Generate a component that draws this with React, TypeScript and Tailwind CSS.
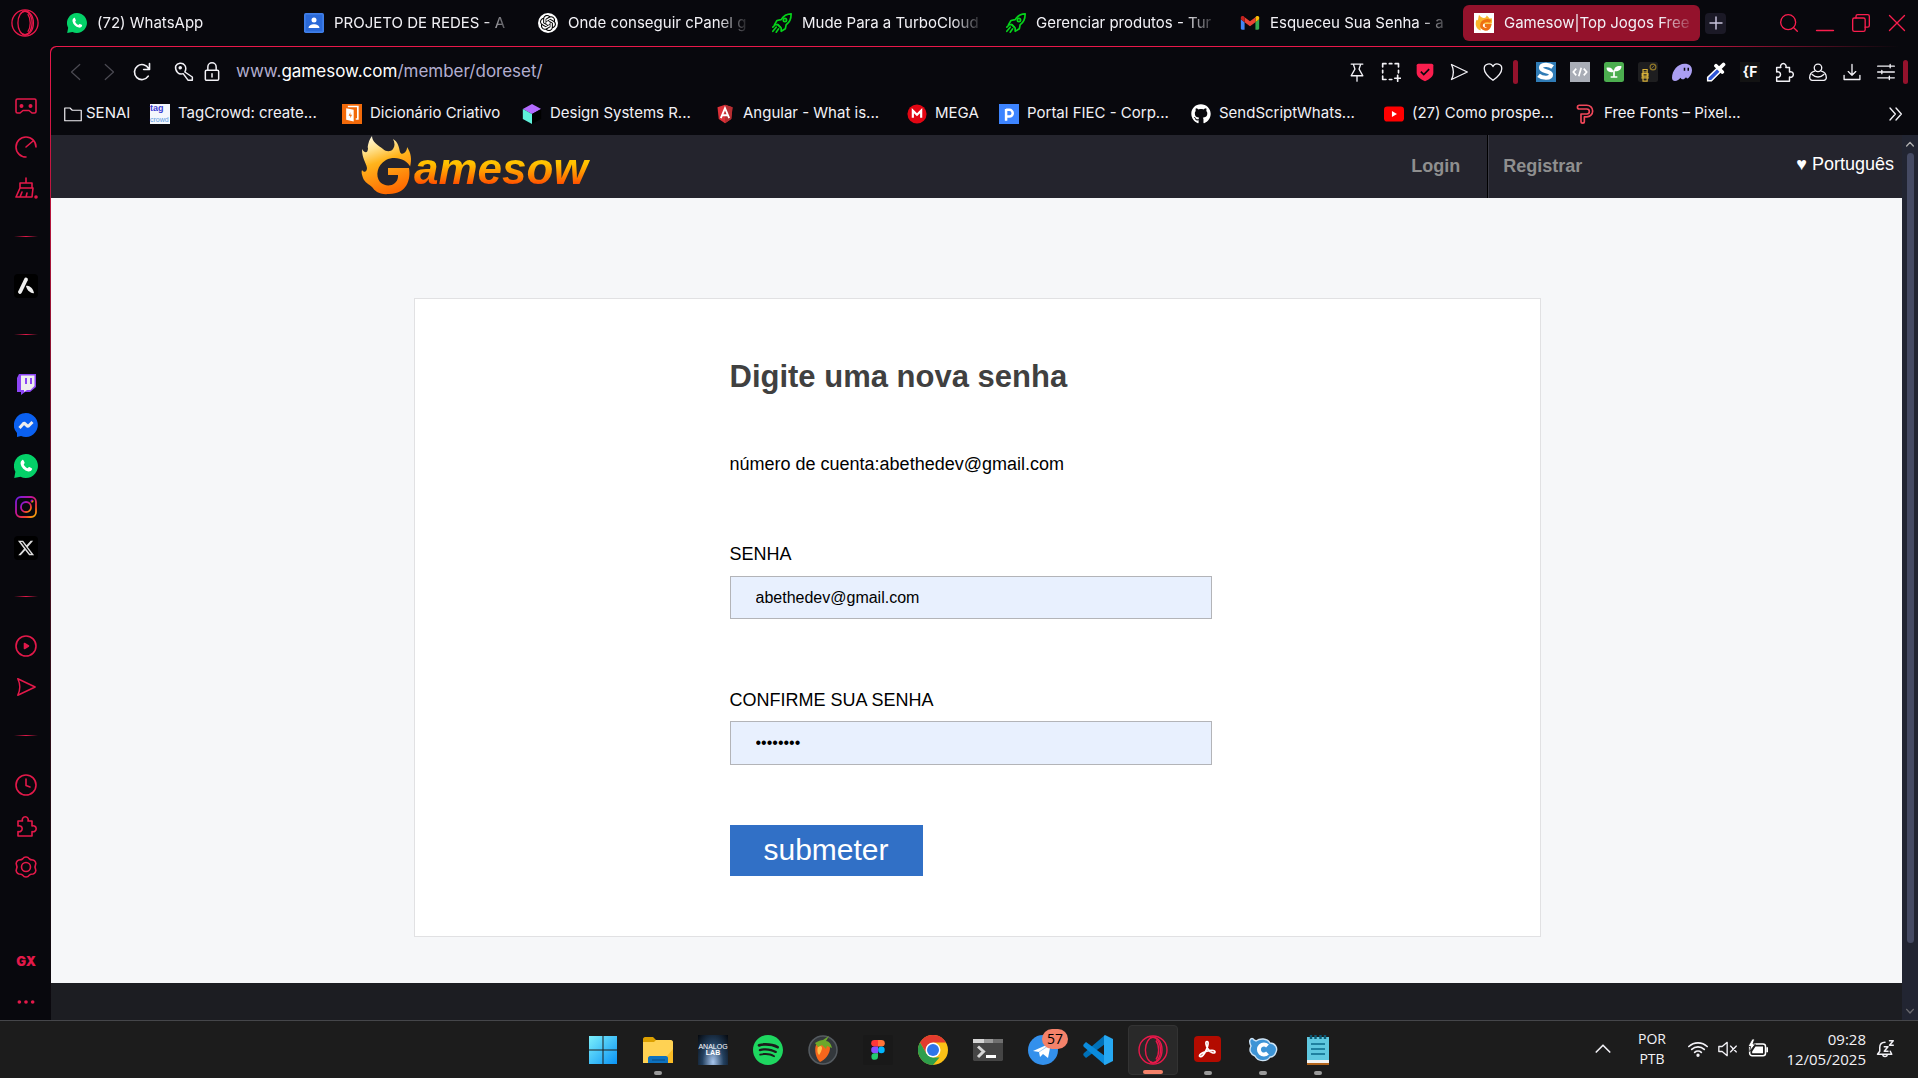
import type { ReactNode } from "react"
import { FaXTwitter } from "react-icons/fa6"
import { FaGithub } from "react-icons/fa"
import { SiOpenai, SiSpotify } from "react-icons/si"

interface StrokeProps {
  children: ReactNode
  className?: string
  width?: number
}

function Stroke({ children, className = "size-5", width = 1.6 }: StrokeProps) {
  return (
    <svg
      viewBox="0 0 24 24"
      className={`shrink-0 ${className}`}
      fill="none"
      stroke="currentColor"
      strokeWidth={width}
      strokeLinecap="round"
      strokeLinejoin="round"
      aria-hidden="true"
    >
      {children}
    </svg>
  )
}

function Fill({ children, className = "size-5" }: StrokeProps) {
  return (
    <svg viewBox="0 0 24 24" className={`shrink-0 ${className}`} aria-hidden="true">
      {children}
    </svg>
  )
}

function OperaRing({ className }: { className: string }) {
  return (
    <svg viewBox="0 0 30 30" className={className} fill="none" stroke="#e8184a" strokeWidth="1.4" aria-hidden="true">
      <circle cx="15" cy="15" r="14" />
      <ellipse cx="15" cy="15" rx="7.6" ry="12.6" />
      <path d="M12 3C18 0 24 6 24 15s-6 15-12 12" />
      <path d="M18 5.500c3.500 5 3.500 14 0 19" />
    </svg>
  )
}

function WhatsAppIcon({ className = "size-5" }: { className?: string }) {
  return (
    <Fill className={className}>
      <path fill="#04d168" d="M12 0a12 12 0 1 1-5.500 22.700L.2 24l1.200-6.200A12 12 0 0 1 12 0z" />
      <path
        fill="#fff"
        d="M8.300 6c.5-.3 1-.2 1.300.4l1 2.200c.2.500-.1.900-.9 1.800.9 1.700 2.200 3 4 3.900.8-1 1.200-1.400 1.700-1.200l2.300 1.100c.5.300.5.800.3 1.400-.6 1.500-2.300 2.200-3.700 1.900-4-.9-7-4-7.700-7.700-.2-1.500.5-3.100 1.700-3.800z"
      />
    </Fill>
  )
}

function RocketIcon() {
  return (
    <Stroke className="size-5 text-[#06d21a]" width={2}>
      <path d="M23 1c-6 0-9 2-12 7l-5 1-3 5 4 0 4 4 0 4 5-3 1-5c5-3 6-7 6-13z" />
      <circle cx="15.500" cy="8.500" r="2" />
      <path d="M7 14l3 3M5 17l-4 5M8 19l-3 4M3 15l-2 2" />
    </Stroke>
  )
}

function FlameG() {
  return (
    <svg viewBox="0 0 54 60" className="h-[60px] w-[54px] shrink-0" aria-hidden="true">
      <defs>
        <linearGradient id="flame" x1="0.2" y1="0" x2="0.5" y2="1">
          <stop offset="0" stopColor="#fff8dc" />
          <stop offset=".22" stopColor="#ffe08a" />
          <stop offset=".45" stopColor="#ffb41c" />
          <stop offset="1" stopColor="#ff6a00" />
        </linearGradient>
      </defs>
      <path
        fill="url(#flame)"
        d="M12 1c0 6 6 9 11 13 3 3 8 3 10 0 2-3 2-6 0-10 5 3 6 8 7 13 1 3 4 2 6-1 1-2 1-3 1-4 4 6 5 12 3 20l-1 1c2 11-2 26-20 26-10 1-14-3-17-7-3-3-7-4-9-9-1-3-2-6-1-8 2 3 5 2 5-2-1-6-5-9-5-19 3 5 6 4 6-1C7 13 9 4 12 1z"
      />
      <path
        fill="#24242d"
        d="M51 33C47 24 35 20.500 26 25c-9 5-11 16-6 22 6 6 17 4 18-5v-2H28v-7z"
      />
    </svg>
  )
}

function FlameFavicon() {
  return (
    <Fill>
      <rect width="24" height="24" fill="#fff" />
      <path fill="#fbb62c" d="M6 2c1 2 4 4 6 4 2 0 3-1 3-3 2 1 3 3 4 4l2-1c1 3 1 5 0 7H8v8C2 19 1 13 3 8c1 1 2 1 2-1z" />
      <path fill="none" stroke="#ee7014" strokeWidth="3.400" d="M20 10c-4-2-10-1-11 4-1 6 8 8 10 1h-6" />
    </Fill>
  )
}

const puzzle = (
  <path d="M4 7h4.500a3 3 0 1 1 5.500 0H18v5a3 3 0 1 1 0 5.500V22H4v-4.500a3 3 0 1 0 0-5.500z" />
)
const plane = <path d="M3 3l19 9L3 21c3-6 3-12 0-18z" />

const tabs = [
  { title: "(72) WhatsApp", width: "w-[237px]", icon: <WhatsAppIcon /> },
  {
    title: "PROJETO DE REDES - A",
    width: "w-[234px]",
    icon: (
      <Fill>
        <rect width="24" height="24" rx="2" fill="#3f7ee8" />
        <rect x="2" y="2" width="20" height="20" fill="#2a69d8" />
        <circle cx="12" cy="8.500" r="3" fill="#fff" />
        <path d="M5.500 18c0-6 13-6 13 0z" fill="#fff" />
      </Fill>
    ),
  },
  {
    title: "Onde conseguir cPanel g",
    width: "w-[234px]",
    icon: (
      <span className="grid size-5 shrink-0 place-items-center rounded-full bg-white text-black">
        <SiOpenai className="size-4" />
      </span>
    ),
  },
  { title: "Mude Para a TurboCloud", width: "w-[234px]", icon: <RocketIcon /> },
  { title: "Gerenciar produtos - Tur", width: "w-[234px]", icon: <RocketIcon /> },
  {
    title: "Esqueceu Sua Senha - a",
    width: "w-[234px]",
    icon: (
      <Fill>
        <path fill="#4285f4" d="M2 20h3.500v-9L1 7.500V19z" />
        <path fill="#34a853" d="M18.500 20H22l1-1V7.500L18.500 11z" />
        <path fill="#fbbc04" d="M18.500 5v6L23 7.500V5.500C23 3.500 21 3 19.500 4z" />
        <path fill="#ea4335" d="M5.500 11V5l6.500 5 6.500-5v6L12 16z" />
        <path fill="#c5221f" d="M1 5.500v2L5.500 11V5L4.500 4C3 3 1 3.500 1 5.500z" />
      </Fill>
    ),
  },
]

const bookmarks = [
  {
    label: "TagCrowd: create...",
    width: "w-48",
    icon: (
      <span className="flex size-5 shrink-0 flex-col justify-between bg-[#f4f7fd] font-['Liberation_Sans'] leading-[9px]">
        <span className="text-[9px] font-bold text-[#3b3bd0]">tag</span>
        <span className="text-[7px] text-[#5b9be0]">crowd</span>
      </span>
    ),
  },
  {
    label: "Dicionário Criativo",
    width: "w-[180px]",
    icon: (
      <Fill>
        <rect width="24" height="24" fill="#f26a0a" />
        <path fill="#fff" d="M5 5l9 2v14l-9-2z" />
        <path d="M7 3h12v15h-2.500" fill="none" stroke="#fff" strokeWidth="2" />
        <path fill="#f26a0a" d="M10 10l-2 4h2v3l2-4h-2z" />
      </Fill>
    ),
  },
  {
    label: "Design Systems R...",
    width: "w-[193px]",
    icon: (
      <Fill>
        <path fill="#b36bff" d="M12 0l11 6-11 6L1 6z" />
        <path fill="#5ff0da" d="M1 6l11 6v12L1 18z" />
        <path fill="#000" d="M23 6l-11 6v12l11-6z" />
      </Fill>
    ),
  },
  {
    label: "Angular - What is...",
    width: "w-48",
    icon: (
      <Fill>
        <path fill="#dd3038" d="M12 1l9 3-1.500 14L12 23l-7.500-5L3 4z" />
        <path fill="#b52e31" d="M12 1l9 3-1.500 14L12 23z" />
        <path fill="none" stroke="#fff" strokeWidth="2.200" d="M7 17l5-12 5 12M9 13.500h6" />
      </Fill>
    ),
  },
  {
    label: "MEGA",
    width: "w-[92px]",
    icon: (
      <Fill>
        <circle cx="12" cy="12" r="11.500" fill="#e30613" />
        <path d="M7 16.500V8l5 5 5-5v8.500" fill="none" stroke="#fff" strokeWidth="2.600" />
      </Fill>
    ),
  },
  {
    label: "Portal FIEC - Corp...",
    width: "w-48",
    icon: (
      <Fill>
        <rect width="24" height="24" fill="#3d84ff" />
        <path d="M8.500 20V6M8.500 7h4a4 4 0 0 1 0 8h-4" fill="none" stroke="#fff" strokeWidth="3" />
      </Fill>
    ),
  },
  { label: "SendScriptWhats...", width: "w-[193px]", icon: <FaGithub className="size-5 shrink-0 text-white" /> },
  {
    label: "(27) Como prospe...",
    width: "w-48",
    icon: (
      <Fill>
        <rect y="3" width="24" height="18" rx="4" fill="#f00" />
        <path fill="#fff" d="M9.500 8.500v7l6-3.500z" />
      </Fill>
    ),
  },
  {
    label: "Free Fonts – Pixel...",
    width: "w-48",
    icon: (
      <Stroke className="size-5 text-[#f0475a]" width={2}>
        <path d="M4 1.500h9a7 7 0 0 1 0 14h-3V21a2 2 0 0 1-4 0v-9h7a3 3 0 0 0 0-6H4a2 2 0 0 1 0-4.500" />
      </Stroke>
    ),
  },
]

const pageActions = [
  {
    label: "Fixar",
    icon: (
      <Stroke>
        <path d="M5 2.500h14M7.500 2.500l2 6-4.500 8h14l-4.500-8 2-6M12 16.500V23" />
      </Stroke>
    ),
  },
  {
    label: "Capturar",
    icon: (
      <Stroke width={2}>
        <path d="M2 6V2h4M10 2h3M17 2h4v4M2 10v3M2 17v4h4M10 21h3M21 10v3M20 16v7M16.500 19.500h7" />
      </Stroke>
    ),
  },
  {
    label: "Bloqueador",
    icon: (
      <Fill>
        <path fill="#fa1e4e" d="M2 4c0-1 1-2 2-2h16c1 0 2 1 2 2v9c0 5-5 8-10 10C7 21 2 18 2 13z" />
        <path d="M7 11.500l3.500 3.500L17 8.500" fill="none" stroke="#08080d" strokeWidth="2" />
      </Fill>
    ),
  },
  { label: "Enviar", icon: <Stroke>{plane}</Stroke> },
  {
    label: "Favoritar",
    icon: (
      <Stroke>
        <path d="M12 22C6 17.500 1.500 13 1.500 8A5.500 5.500 0 0 1 12 5.500 5.500 5.500 0 0 1 22.500 8c0 5-4.500 9.500-10.500 14z" />
      </Stroke>
    ),
  },
]

const extensions = [
  {
    label: "Extensão S",
    icon: (
      <Fill>
        <rect width="24" height="24" fill="#2f7bb5" />
        <path d="M20 6c-5-4-14-3-14 1 0 5 12 3 12 8 0 5-10 5-15 1" fill="none" stroke="#fff" strokeWidth="5" />
      </Fill>
    ),
  },
  {
    label: "Código",
    icon: (
      <Fill>
        <rect width="24" height="24" fill="#a9adb6" />
        <path d="M7.500 8L4 12l3.500 4M16.500 8l3.500 4-3.500 4M13.500 7l-3 10" fill="none" stroke="#fff" strokeWidth="2" />
      </Fill>
    ),
  },
  {
    label: "Broto",
    icon: (
      <Fill>
        <rect width="24" height="24" rx="3" fill="#4cae4f" />
        <path fill="#fff" d="M3 7c5-1 8 1 8 5-5 1-8-1-8-5zM21 5c-5-1-9 1-9 6 5 1 9-2 9-6z" />
        <path d="M12 10v8M8 18h8" stroke="#fff" strokeWidth="2" />
      </Fill>
    ),
  },
  {
    label: "Abelha",
    icon: (
      <Fill>
        <rect width="24" height="24" rx="3" fill="#1e1e20" />
        <path d="M6 9h5v3H6zM5 14h7v3H5zM4 19h9M6 12v11h5V12" fill="none" stroke="#d8b13a" strokeWidth="1.400" />
        <circle cx="18" cy="6" r="3.500" fill="none" stroke="#8f7628" strokeWidth="1.400" />
        <path d="M16 8l4-4" stroke="#8f7628" />
      </Fill>
    ),
  },
  {
    label: "Fantasma",
    icon: (
      <Fill>
        <path fill="#ab9ff2" d="M0 19C0 10 7 2 15 2c6 0 9 3 9 8 0 4-2 7-4 9-1 1-3 1-3-1-1 2-4 4-6 2l-1-1c-2 4-10 6-10 0z" />
        <path d="M15 7v3.500M19.500 7v3.500" stroke="#08080d" strokeWidth="1.800" />
      </Fill>
    ),
  },
  {
    label: "Conta-gotas",
    icon: (
      <Fill>
        <path d="M14 7l4 4L6.500 22.500H2v-4z" fill="#2f57d8" stroke="#fff" strokeWidth="1.800" />
        <path d="M12 4.500l7.500 7.500M16 8l5-5" stroke="#fff" strokeWidth="4.500" strokeLinecap="round" />
      </Fill>
    ),
  },
  {
    label: "Fontes",
    icon: (
      <span className="grid size-5 place-items-center bg-[#131313] text-sm font-bold text-white">
        {"{F"}
      </span>
    ),
  },
  { label: "Extensões", icon: <Stroke className="size-[22px]">{puzzle}</Stroke> },
  {
    label: "Perfil",
    icon: (
      <Stroke>
        <circle cx="12" cy="7" r="4.500" />
        <path d="M8 11c-4 1-6 4-6 8 0 1 1 3 3 3h14c2 0 3-2 3-3 0-4-2-7-6-8M5 15c4 4 10 4 14 0" />
      </Stroke>
    ),
  },
  {
    label: "Downloads",
    icon: (
      <Stroke>
        <path d="M12 3v13M7.500 11.500L12 16l4.500-4.500M2.500 16v5h19v-5" />
      </Stroke>
    ),
  },
  {
    label: "Configuração fácil",
    icon: (
      <Stroke>
        <path d="M2 5h20M2 12h20M2 19h20M17 3v4M7 10v4M16 17v4" />
      </Stroke>
    ),
  },
]

const sidebarGroups = [
  [
    {
      label: "GX Games",
      icon: (
        <Stroke className="size-6">
          <path d="M3.500 5h17c1 0 1.500.5 1.500 1.500v11c0 1-.5 1.500-1.500 1.500H18l-3-2.500H9L6 19H3.500C2.500 19 2 18.500 2 17.500v-11C2 5.500 2.500 5 3.500 5z" />
          <circle cx="7.500" cy="12" r="1.200" fill="currentColor" />
          <circle cx="16.500" cy="12" r="1.200" fill="currentColor" />
        </Stroke>
      ),
    },
    {
      label: "GX Control",
      icon: (
        <Stroke className="size-6">
          <path d="M12 22a10 10 0 1 1 10-10M12 12l7-6" />
        </Stroke>
      ),
    },
    {
      label: "GX Cleaner",
      icon: (
        <Stroke className="size-6">
          <path d="M12 2v5M6 7h12v5H6zM6 12l-4 9h16l1-9M8 16l-2 5M13 17l-1 4" />
          <circle cx="22" cy="21" r="1" fill="currentColor" />
        </Stroke>
      ),
    },
  ],
  [
    {
      label: "Aria",
      icon: (
        <Fill className="size-6">
          <rect width="24" height="24" rx="4" fill="#000" />
          <path d="M12 5.500L6 18" stroke="#eee" strokeWidth="3.800" strokeLinecap="round" />
          <path fill="#eee" d="M12 12c3-1 7 2 8 7-2 1-7-2-8-7z" />
        </Fill>
      ),
    },
  ],
  [
    {
      label: "Twitch",
      icon: (
        <Fill className="size-6">
          <path fill="#8d45f5" d="M5 2h17v13l-6 5h-5l-4 3v-3H3V6z" />
          <path fill="#eee" d="M7 3.500h13.500V14l-4 4H13l-3 2v-2H7z" />
          <path d="M12 6v6M17 6v6" stroke="#8d45f5" strokeWidth="2" />
        </Fill>
      ),
    },
    {
      label: "Messenger",
      icon: (
        <Fill className="size-6">
          <path fill="#0a60f0" d="M12 0a12 12 0 1 1-5 23l-4 1v-4A12 12 0 0 1 12 0z" />
          <path d="M5.500 15l4.500-5 4 3.500L18.500 9" fill="none" stroke="#eee" strokeWidth="3" strokeLinejoin="bevel" />
        </Fill>
      ),
    },
    { label: "WhatsApp", icon: <WhatsAppIcon className="size-6" /> },
    {
      label: "Instagram",
      icon: (
        <svg viewBox="0 0 24 24" className="size-6" fill="none" stroke="url(#insta)" strokeWidth="1.800" aria-hidden="true">
          <defs>
            <linearGradient id="insta" x1="0" y1="0" x2="1" y2="1">
              <stop offset="0" stopColor="#6a1de8" />
              <stop offset=".45" stopColor="#d0148c" />
              <stop offset=".75" stopColor="#f2452a" />
              <stop offset="1" stopColor="#f9c400" />
            </linearGradient>
          </defs>
          <rect x="2" y="2" width="20" height="20" rx="5" />
          <circle cx="12" cy="12" r="5" />
          <circle cx="18" cy="6" r=".6" />
        </svg>
      ),
    },
    {
      label: "X",
      icon: (
        <span className="grid size-6 place-items-center rounded bg-black text-[#ddd]">
          <FaXTwitter className="size-[18px]" />
        </span>
      ),
    },
  ],
  [
    {
      label: "Player",
      icon: (
        <Stroke className="size-6">
          <circle cx="12" cy="12" r="10" />
          <path d="M10.500 9.500v5l4-2.500z" fill="currentColor" />
        </Stroke>
      ),
    },
    { label: "Fluxo", icon: <Stroke className="size-[22px]">{plane}</Stroke> },
  ],
  [
    {
      label: "Histórico",
      icon: (
        <Stroke className="size-6">
          <circle cx="12" cy="12" r="10" />
          <path d="M12 6v6.500l4 1.500" />
        </Stroke>
      ),
    },
    { label: "Extensões", icon: <Stroke className="size-6">{puzzle}</Stroke> },
    {
      label: "Configurações",
      icon: (
        <Stroke className="size-6">
          <circle cx="12" cy="12" r="4.500" />
          <path d="M9 3.500c1-2 5-2 6 0 1 1.500 2 1.500 4 1.500 2 .5 3.500 3 2.500 5-.8 1.500-.8 2.500 0 4 1 2-.5 4.500-2.500 5-2 0-3 0-4 1.500-1 2-5 2-6 0-1-1.500-2-1.500-4-1.500-2-.5-3.500-3-2.500-5 .8-1.500.8-2.500 0-4C1.500 8 3 5.500 5 5c2 0 3 0 4-1.500z" />
        </Stroke>
      ),
    },
  ],
]

function TabStrip() {
  return (
    <header className="flex h-[46px] items-center">
      <button aria-label="Menu" className="flex w-[50px] shrink-0 justify-center">
        <OperaRing className="size-7" />
      </button>
      <div className="flex min-w-0 items-center pl-[6px]">
        {tabs.map((tab) => (
          <button
            key={tab.title}
            className={`flex h-9 min-w-0 items-center gap-[10px] pr-3 pl-[11px] text-left ${tab.width}`}
          >
            {tab.icon}
            <span className="flex-1 overflow-hidden pt-px whitespace-nowrap [mask-image:linear-gradient(to_right,black_150px,transparent_182px)]">
              {tab.title}
            </span>
          </button>
        ))}
        <button className="flex h-9 w-[237px] min-w-0 items-center gap-[10px] rounded-md bg-[#94122c] pr-2 pl-[11px] text-left">
          <FlameFavicon />
          <span className="flex-1 overflow-hidden pt-px whitespace-nowrap [mask-image:linear-gradient(to_right,black_156px,transparent_192px)]">
            Gamesow|Top Jogos Free
          </span>
        </button>
        <button aria-label="Nova aba" className="ml-[5px] grid size-[21px] shrink-0 place-items-center rounded bg-[#1b1926] text-[#c9c4dc]">
          <Stroke className="size-4" width={2.200}>
            <path d="M12 3v18M3 12h18" />
          </Stroke>
        </button>
      </div>
      <div className="ml-auto flex items-center gap-4 pr-[11px] text-[#fa1e4e]">
        <button aria-label="Pesquisar">
          <Stroke>
            <circle cx="11" cy="11" r="9" />
            <path d="M18 18l4 4" />
          </Stroke>
        </button>
        <button aria-label="Minimizar">
          <Stroke>
            <path d="M2 21h20" strokeWidth="2" />
          </Stroke>
        </button>
        <button aria-label="Restaurar">
          <Stroke>
            <rect x="2" y="6" width="15" height="16" rx="2" />
            <path d="M6 6V4c0-1 1-2 2-2h12c1 0 2 1 2 2v11c0 1-1 2-2 2h-3" />
          </Stroke>
        </button>
        <button aria-label="Fechar">
          <Stroke>
            <path d="M3 3l18 18M21 3L3 21" />
          </Stroke>
        </button>
      </div>
    </header>
  )
}

function Sidebar() {
  return (
    <nav className="flex w-[50px] shrink-0 flex-col items-center pt-[39px] pl-[2px] text-[#e3194a]">
      {sidebarGroups.map((group, index) => (
        <div key={index} className="flex flex-col items-center">
          {index > 0 && (
            <span className="my-7 h-px w-6 bg-linear-to-r from-transparent via-[#e3194a] to-transparent" />
          )}
          {group.map((item) => (
            <button key={item.label} aria-label={item.label} className="grid h-[41px] w-10 place-items-center">
              {item.icon}
            </button>
          ))}
        </div>
      ))}
      <button className="mt-auto h-11 w-10 text-[13px] font-black">GX</button>
      <button aria-label="Mais" className="grid h-9 w-10 place-items-center">
        <Fill>
          <g fill="#e3194a">
            <circle cx="4" cy="12" r="2.200" />
            <circle cx="12" cy="12" r="2.200" />
            <circle cx="20" cy="12" r="2.200" />
          </g>
        </Fill>
      </button>
    </nav>
  )
}

function AddressBar() {
  return (
    <div className="flex h-[50px] items-center pr-[10px] pl-2">
      <button aria-label="Voltar" className="grid w-[33px] place-items-center text-[#4b4a52]">
        <Stroke className="size-[18px]">
          <path d="M17 2L6 12l11 10" />
        </Stroke>
      </button>
      <button aria-label="Avançar" className="grid w-[33px] place-items-center text-[#4b4a52]">
        <Stroke className="size-[18px]">
          <path d="M7 2l11 10L7 22" />
        </Stroke>
      </button>
      <button aria-label="Recarregar" className="grid w-[33px] place-items-center">
        <Stroke width={2}>
          <path d="M19.500 17A9 9 0 1 1 20 8M21 2v7h-7" />
        </Stroke>
      </button>
      <button aria-label="Senhas" className="ml-[14px] grid w-6 place-items-center">
        <Stroke width={1.800}>
          <path d="M2 5c2-4 8-5 11-1 2 3 1 6 0 8l9 6v4h-5l-6-8C6 16 1 11 2 5z" />
          <circle cx="7.500" cy="7" r="1.200" fill="currentColor" />
        </Stroke>
      </button>
      <button aria-label="Segurança" className="ml-1 grid w-6 place-items-center">
        <Stroke width={1.800}>
          <rect x="4" y="10" width="16" height="12" rx="1.500" />
          <path d="M7 10V6a5 5 0 0 1 10 0v4M12 14v4" />
        </Stroke>
      </button>
      <p className="ml-3 text-[17px] text-[#b3aed0]">
        www.<span className="text-white">gamesow.com</span>/member/doreset/
      </p>
      <div className="ml-auto flex items-center">
        {pageActions.map((action) => (
          <button key={action.label} aria-label={action.label} className="grid w-[34px] place-items-center">
            {action.icon}
          </button>
        ))}
        <span className="mr-[11px] ml-[3px] h-6 w-[5px] rounded-sm bg-[#94122c]" />
        {extensions.map((extension) => (
          <button key={extension.label} aria-label={extension.label} className="grid w-[34px] place-items-center">
            {extension.icon}
          </button>
        ))}
        <span className="h-6 w-[5px] rounded-sm bg-[#94122c]" />
      </div>
    </div>
  )
}

function BookmarksBar() {
  return (
    <div className="flex h-[38px] items-center pr-[14px] pb-[5px] pl-[13px]">
      <button className="flex w-[86px] items-center gap-1">
        <Stroke className="size-[18px]">
          <path d="M1 4h7l3 3h12v14H1z" />
        </Stroke>
        SENAI
      </button>
      {bookmarks.map((bookmark) => (
        <a key={bookmark.label} href="#" className={`flex items-center gap-2 whitespace-nowrap ${bookmark.width}`}>
          {bookmark.icon}
          {bookmark.label}
        </a>
      ))}
      <button aria-label="Mais favoritos" className="ml-auto">
        <Stroke className="size-4" width={2}>
          <path d="M3 3l8 9-8 9M12 3l8 9-8 9" />
        </Stroke>
      </button>
    </div>
  )
}

function SiteHeader() {
  return (
    <div className="flex h-[63px] bg-[#24242d] pr-2 pl-[309px] text-lg">
      <a href="#" aria-label="Gamesow" className="flex items-start">
        <FlameG />
        <span className="bg-linear-to-b from-[#ffc400] from-45% to-[#ff4a00] to-80% bg-clip-text pt-[6px] pr-2 text-[44px] leading-[56px] font-bold text-transparent italic">
          amesow
        </span>
      </a>
      <nav className="ml-auto flex font-bold text-[#8f8f8f]">
        <a href="#" className="flex items-center border-r border-black pr-[27px] pb-[2px]">
          Login
        </a>
        <a href="#" className="flex items-center border-l border-[#3a3a44] pr-[214px] pb-[2px] pl-[14px]">
          Registrar
        </a>
      </nav>
      <button className="pb-[6px] text-white">♥ Português</button>
    </div>
  )
}

function ResetForm() {
  return (
    <form className="mx-auto w-[496px] pt-[58px] pb-[60px] text-lg leading-6" onSubmit={(e) => e.preventDefault()}>
      <h1 className="text-[31px] leading-10 font-bold text-[#404040]">Digite uma nova senha</h1>
      <p className="mt-[55px]">número de cuenta:abethedev@gmail.com</p>
      <label htmlFor="senha" className="mt-[66px] block">
        SENHA
      </label>
      <input
        id="senha"
        type="text"
        defaultValue="abethedev@gmail.com"
        className="mt-[10px] block h-[43px] w-[482px] border border-[#b3b4b8] bg-[#e8f0fe] px-[25px] text-base"
      />
      <label htmlFor="confirme" className="mt-[69px] block">
        CONFIRME SUA SENHA
      </label>
      <input
        id="confirme"
        type="password"
        defaultValue="abethede"
        className="mt-[9px] block h-11 w-[482px] border border-[#b3b4b8] bg-[#e8f0fe] px-[25px] text-base"
      />
      <button type="submit" className="mt-[60px] h-[51px] w-[193px] bg-[#3170c6] pb-[2px] text-[30px] text-white">
        submeter
      </button>
    </form>
  )
}

function SitePage() {
  return (
    <div className="flex flex-1">
      <div className="flex min-w-0 flex-1 flex-col font-['Liberation_Sans',Arial,sans-serif] text-black">
        <SiteHeader />
        <main className="bg-[#f6f7f9] pt-[100px] pb-[46px] pl-[2px]">
          <div className="mx-auto max-w-[1127px] border border-[#e1e1e3] bg-white">
            <ResetForm />
          </div>
        </main>
        <footer className="flex-1 bg-[#1c1d22]" />
      </div>
      <div className="flex w-4 flex-col items-center justify-between bg-[#222532] py-[5px] text-[#b0b0b0]">
        <Stroke className="size-2" width={4}>
          <path d="M2 18L12 7l10 11" />
        </Stroke>
        <span className="mt-[5px] mb-16 w-[7px] flex-1 rounded-full bg-[#454a63]" />
        <Stroke className="size-2 text-[#6b6b70]" width={4}>
          <path d="M2 7l10 11L22 7" />
        </Stroke>
      </div>
    </div>
  )
}

const taskbarApps = [
  {
    label: "Iniciar",
    icon: (
      <svg viewBox="0 0 30 30" className="size-[30px]" aria-hidden="true">
        <defs>
          <linearGradient id="win" x1="0" y1="0" x2="1" y2="1">
            <stop offset="0" stopColor="#7cf0fb" />
            <stop offset="1" stopColor="#0a93f5" />
          </linearGradient>
        </defs>
        <path fill="url(#win)" d="M1 1h13.500v13.500H1zM15.500 1H29v13.500H15.500zM1 15.500h13.500V29H1zM15.500 15.500H29V29H15.500z" />
      </svg>
    ),
  },
  {
    label: "Explorador de Arquivos",
    running: true,
    icon: (
      <svg viewBox="0 0 30 30" className="size-[30px]" aria-hidden="true">
        <path fill="#dca000" d="M0 4c0-1 1-2 2-2h8l3 3v6H0z" />
        <path fill="#ffd253" d="M0 7h11l2-2h15c1 0 2 1 2 2v21H0z" />
        <path fill="#fbbc25" d="M18 28L30 14v14z" />
        <path fill="#0d72c0" d="M5 28v-5c0-1 1-2 2-2h16c1 0 2 1 2 2v5z" />
        <path d="M9 25h13" stroke="#0a4a80" />
      </svg>
    ),
  },
  {
    label: "Analog Lab",
    icon: (
      <span className="flex size-[30px] flex-col items-center justify-center bg-radial-[at_50%_90%] from-[#a8c6ee] via-[#23405f] to-[#05080d] font-['Liberation_Sans'] text-[7px] leading-[6px] text-white">
        <span>ANALOG</span>
        <b>LAB</b>
      </span>
    ),
  },
  { label: "Spotify", icon: <SiSpotify className="size-[30px] text-[#1ed760]" /> },
  {
    label: "FL Studio",
    icon: (
      <svg viewBox="0 0 30 30" className="size-[30px]" aria-hidden="true">
        <circle cx="15" cy="15" r="14" fill="#33383c" stroke="#555b60" strokeWidth="1.500" />
        <path fill="#f5661c" d="M8 10c5-4 13-2 14 3 0 6-5 12-10 14-4-3-6-12-4-17z" />
        <path fill="#ffc04a" d="M10 12c2-2 4-1 4 1s-2 6-3 7c-2-2-2-6-1-8z" />
        <path fill="#6da82a" d="M7 8c3-2 6-3 8-3l6-4-3 5c3 0 5 3 6 7l-5-2-1 3-4-4-4 2z" />
      </svg>
    ),
  },
  {
    label: "Figma",
    icon: (
      <svg viewBox="0 0 30 30" className="size-[30px]" aria-hidden="true">
        <rect width="30" height="30" rx="2" fill="#191919" />
        <path fill="#ff3737" d="M15 5h-3.500a3.300 3.300 0 0 0 0 6.600H15z" />
        <path fill="#ff7237" d="M15 5h3.500a3.300 3.300 0 0 1 0 6.600H15z" />
        <path fill="#874fff" d="M15 11.600h-3.500a3.300 3.300 0 0 0 0 6.600H15z" />
        <circle cx="18.400" cy="14.900" r="3.300" fill="#00b6ff" />
        <path fill="#24cb71" d="M15 18.200h-3.500a3.300 3.300 0 1 0 3.500 3.300z" />
      </svg>
    ),
  },
  {
    label: "Chrome",
    icon: (
      <svg viewBox="0 0 30 30" className="size-[30px]" aria-hidden="true">
        <circle cx="15" cy="15" r="15" fill="#fbc116" />
        <path fill="#e33b2e" d="M2 7.500A15 15 0 0 1 28 7.500H15L8.500 18.700z" />
        <path fill="#2e9e4b" d="M2 7.500l6.500 11.200L15 22.500h6.500L15 30A15 15 0 0 1 2 7.500z" />
        <circle cx="15" cy="15" r="7.500" fill="#fff" />
        <circle cx="15" cy="15" r="6" fill="#2f75e8" />
      </svg>
    ),
  },
  {
    label: "Terminal",
    icon: (
      <svg viewBox="0 0 30 30" className="size-[30px]" aria-hidden="true">
        <path fill="#454545" d="M0 5c0-1 1-1 1-1h28s1 0 1 1v20l-1 1H1l-1-1z" />
        <path fill="#d5d5d5" d="M0 4h11v4H0z" />
        <path fill="#9a9a9a" d="M11 4h9v4h-9z" />
        <path fill="#6f6f6f" d="M20 4h10v4H20z" />
        <path d="M5 11.500l5.500 5L5 22" fill="none" stroke="#d5d5d5" strokeWidth="3" />
        <path d="M13 21.500h10" stroke="#fff" strokeWidth="3" />
      </svg>
    ),
  },
  {
    label: "Telegram",
    badge: "57",
    icon: (
      <svg viewBox="0 0 30 30" className="size-[30px]" aria-hidden="true">
        <circle cx="15" cy="15" r="15" fill="#3390ec" />
        <path fill="#fff" d="M5 16L23 8l-3 15-5-4-3 3-1-5z" />
        <path d="M11 17l9-6" stroke="#9fcbf7" />
      </svg>
    ),
  },
  {
    label: "Visual Studio Code",
    icon: (
      <svg viewBox="0 0 30 30" className="size-[30px]" aria-hidden="true">
        <path fill="#0071b8" d="M22 0L1 18c-1 1-1 2 0 3l2 2 19-14z" />
        <path fill="#0a8bdc" d="M22 30L1 12c-1-1-1-2 0-3l2-2 19 14z" />
        <path fill="#26a8f2" d="M22 0l8 4v22l-8 4c-1 0-1-1-1-1V1z" />
      </svg>
    ),
  },
  { label: "Opera GX", active: true, icon: <OperaRing className="size-[30px]" /> },
  {
    label: "Acrobat",
    running: true,
    icon: (
      <svg viewBox="0 0 30 30" className="size-[30px]" aria-hidden="true">
        <rect x="1" y="1" width="27" height="26" rx="4" fill="#b30b00" />
        <path d="M14 6.500c2 0 1 5-1 9-2 4-4 7-6 6s2-4 6-5c4-1.500 9-1.500 9 .5s-5 1-7-3c-2-3-3-7.500-1-7.500z" fill="none" stroke="#fff" strokeWidth="1.700" />
      </svg>
    ),
  },
  {
    label: "Assistente",
    running: true,
    icon: (
      <svg viewBox="0 0 30 30" className="size-[30px]" aria-hidden="true">
        <path fill="#3d94d6" stroke="#cfe4f5" strokeWidth="1.400" d="M2 5c1-2 3-2 4 0l2 1c4-3 11-3 14 2 5 0 8 5 6 9-1 3-3 5-6 5-3 5-12 5-15-1-5-2-6-6-4-10C2 9 1 7 2 5z" />
        <path d="M19.500 11a5 5 0 1 0 0 7" fill="none" stroke="#fff" strokeWidth="4" />
      </svg>
    ),
  },
  {
    label: "Bloco de Notas",
    running: true,
    icon: (
      <svg viewBox="0 0 30 30" className="size-[30px]" aria-hidden="true">
        <rect x="4" y="2" width="22" height="25" fill="#5fc8e0" />
        <path fill="#f3f3f3" d="M4 25h22v3H4z" />
        <path fill="#b3651c" d="M4 28h22v2H4z" />
        <path d="M8 0v4M12.500 0v4M17.500 0v4M22 0v4" stroke="#0b5873" strokeWidth="2.400" />
        <path d="M8 9h14M8 14h14M8 19h14" stroke="#0b6a8a" strokeWidth="1.700" />
      </svg>
    ),
  },
]

function Taskbar() {
  return (
    <footer className="grid h-[58px] grid-cols-[1fr_auto_1fr] items-center border-t border-[#45464a] bg-[#1c1c1c] pl-[3px]">
      <div className="col-start-2 flex gap-[5px]">
        {taskbarApps.map((app) => (
          <button
            key={app.label}
            aria-label={app.label}
            className={`relative grid h-[50px] w-[50px] place-items-center rounded ${
              app.active ? "border border-[#333] bg-[#292929]" : ""
            }`}
          >
            {app.icon}
            {app.badge && (
              <span className="absolute top-1 right-0 h-5 w-[26px] rounded-full bg-[#f4826a] font-['Open_Sans'] text-sm leading-5 text-black">
                {app.badge}
              </span>
            )}
            {app.active && <span className="absolute bottom-0 h-1 w-5 rounded-full bg-[#f4826a]" />}
            {app.running && <span className="absolute bottom-0 h-1 w-2 rounded-full bg-[#9a9a9a]" />}
          </button>
        ))}
      </div>
      <div className="flex items-center justify-end pr-6 pb-px font-['Open_Sans','Noto_Sans',sans-serif] text-sm leading-5">
        <button aria-label="Ícones ocultos">
          <Stroke className="size-[18px]" width={2.200}>
            <path d="M3 16l9-9 9 9" />
          </Stroke>
        </button>
        <div className="ml-[22px] w-9 text-center">
          <p>POR</p>
          <p>PTB</p>
        </div>
        <div className="ml-[18px] flex items-center gap-[10px]">
          <Stroke className="size-5" width={2}>
            <path d="M1 9a16 16 0 0 1 22 0M4.500 12.500a11 11 0 0 1 15 0M8 16a6 6 0 0 1 8 0" />
            <circle cx="12" cy="19.500" r="1" fill="currentColor" />
          </Stroke>
          <Stroke className="size-5" width={1.600}>
            <path d="M1 9h4l6-5v16l-6-5H1zM15 8.500l7 7M22 8.500l-7 7" />
          </Stroke>
          <Fill>
            <rect x="2" y="6" width="19" height="14" rx="3" fill="none" stroke="#fff" strokeWidth="1.800" />
            <path fill="#fff" d="M9 9h9v8H5v-2zM22 10h2v6h-2z" />
            <path fill="#fff" stroke="#1c1c1c" d="M5 0L0 9h3l-1 6 7-9H6l2-6z" />
          </Fill>
        </div>
        <div className="ml-[18px] w-20 text-right text-[15px] leading-5 whitespace-nowrap">
          <p>09:28</p>
          <p>12/05/2025</p>
        </div>
        <button aria-label="Notificações" className="ml-[10px]">
          <Stroke className="size-[18px]" width={2}>
            <path d="M12 3c-5 0-7 3-7 7v5l-3 4h19l-2-4M9 19c0 4 6 4 6 0M11 9h5l-5 6h5M18 1h5l-5 6h5" />
          </Stroke>
        </button>
      </div>
    </footer>
  )
}

export default function App() {
  return (
    <div className="flex min-h-screen flex-col bg-[#08080d] font-[Inter,sans-serif] text-[15px] text-[#f2f1f6]">
      <TabStrip />
      <div className="flex flex-1">
        <Sidebar />
        <div className="flex min-w-0 flex-1 flex-col overflow-hidden rounded-tl-md pt-px pl-px [background:linear-gradient(to_right,#e8184a_86%,#08080d_99%)_0_0/100%_1px_no-repeat,linear-gradient(to_bottom,#e8184a,#3a0f1c_60%,#08080d)_0_0/6px_100%_no-repeat]">
          <div className="flex flex-1 flex-col overflow-hidden rounded-tl-md bg-[#08080d]">
            <AddressBar />
            <BookmarksBar />
            <SitePage />
          </div>
        </div>
      </div>
      <Taskbar />
    </div>
  )
}
